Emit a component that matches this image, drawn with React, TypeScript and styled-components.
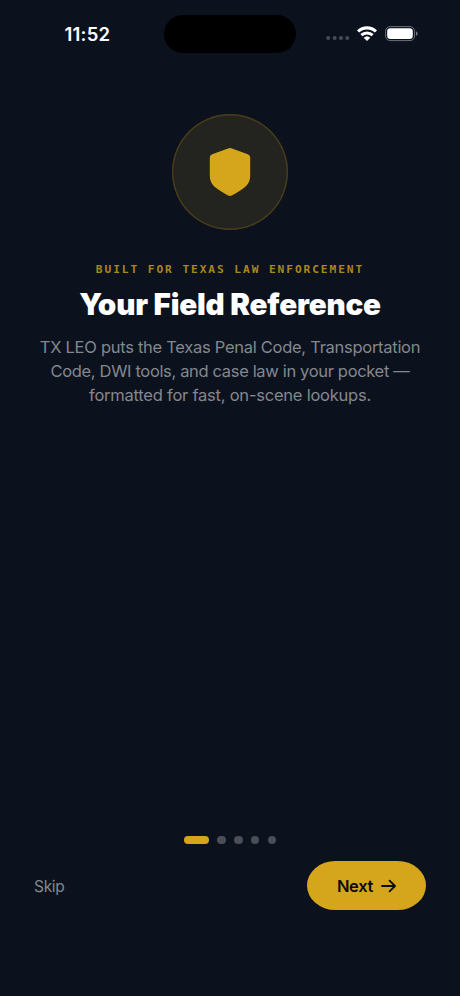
import React from "react";
import styled, { createGlobalStyle } from "styled-components";

const GlobalStyle = createGlobalStyle`
  *, *::before, *::after { box-sizing: border-box; }
  body { margin: 0; background: #0b121e; }
`;

const Screen = styled.main`
  width: 460px;
  height: 996px;
  display: flex;
  flex-direction: column;
  overflow: hidden;
  background: #0b121e;
  font-family: Inter, "Liberation Sans", sans-serif;
`;

const StatusBar = styled.header`
  display: grid;
  grid-template-columns: 164px 132px 164px;
  align-items: center;
  height: 38px;
  margin-top: 15px;
`;

const Time = styled.time`
  padding: 0 0 0 64.5px;
  font-size: 18.5px;
  line-height: 22px;
  font-weight: 600;
  letter-spacing: 0.2px;
  color: #fff;
`;

const Island = styled.div`
  height: 38px;
  border-radius: 19px;
  background: #000;
`;

const Indicators = styled.div`
  display: flex;
  align-items: center;
  padding-left: 30px;
  svg { display: block; flex: none; }
`;

const Hero = styled.section`
  display: flex;
  flex-direction: column;
  align-items: center;
  padding-top: 61px;
  text-align: center;
`;

const Emblem = styled.div`
  display: grid;
  place-items: center;
  width: 116px;
  height: 116px;
  border-radius: 50%;
  background: #23231f;
  box-shadow: inset 0 0 0 1.4px #4a3d19;
`;

const Kicker = styled.p`
  margin: 32px 0 0;
  font-family: "DejaVu Sans Mono", "Liberation Mono", monospace;
  font-size: 11.2px;
  line-height: 16px;
  font-weight: 700;
  letter-spacing: 1.92px;
  color: #a9871c;
`;

const Title = styled.h1`
  margin: 8px 0 0;
  font-size: 29.6px;
  line-height: 36px;
  font-weight: 900;
  letter-spacing: -0.18px;
  color: #fff;
`;

const Description = styled.p`
  margin: 13px 0 0;
  font-size: 16.5px;
  line-height: 24px;
  color: #84878d;
`;

const Line = styled.span<{ $tracking: number }>`
  display: block;
  white-space: nowrap;
  letter-spacing: ${(p) => p.$tracking}px;
`;

const Footer = styled.footer`
  margin-top: auto;
  padding: 0 34px 86px;
`;

const Pager = styled.div`
  display: flex;
  justify-content: center;
  gap: 8.5px;
`;

const Dot = styled.span<{ $active?: boolean }>`
  width: ${(p) => (p.$active ? 25 : 8.3)}px;
  height: 8.3px;
  border-radius: 5px;
  background: ${(p) => (p.$active ? "#d5a61c" : "#4b4e57")};
`;

const Actions = styled.div`
  display: flex;
  align-items: center;
  justify-content: space-between;
  margin-top: 17px;
`;

const SkipButton = styled.button`
  padding: 2px 0 0;
  border: 0;
  background: none;
  font: 400 15.5px/20px Inter, sans-serif;
  letter-spacing: -0.3px;
  color: #84878d;
`;

const NextButton = styled.button`
  display: flex;
  align-items: center;
  justify-content: center;
  gap: 8px;
  width: 119px;
  height: 49px;
  padding: 0;
  border: 0;
  border-radius: 29px / 25px;
  background: #d5a61c;
  font: 600 16.5px/20px Inter, sans-serif;
  letter-spacing: -0.3px;
  color: #0b0d0f;
`;

const lines = [
  { text: "TX LEO puts the Texas Penal Code, Transportation", tracking: -0.28 },
  { text: "Code, DWI tools, and case law in your pocket —", tracking: -0.34 },
  { text: "formatted for fast, on-scene lookups.", tracking: -0.23 },
];

export default function App() {
  return (
    <Screen>
      <GlobalStyle />
      <StatusBar>
        <Time>11:52</Time>
        <Island />
        <Indicators>
          <svg width="94" height="20" viewBox="0 0 94 20">
            <g fill="#464b56">
              <circle cx="2.2" cy="14" r="2" />
              <circle cx="8.6" cy="14" r="2" />
              <circle cx="15" cy="14" r="2" />
              <circle cx="21.2" cy="14" r="2" />
            </g>
            <g fill="none" stroke="#fff" strokeWidth="3.1">
              <path d="M32.1 7.5a12.7 12.7 0 0 1 17.8 0" />
              <path d="M35.4 11.2a8.1 8.1 0 0 1 11.2 0" />
            </g>
            <path d="M37.7 13.8a4.8 4.8 0 0 1 6.6 0L41 17z" fill="#fff" />
            <rect x="59.6" y="2.6" width="29" height="14" rx="4.6" fill="none" stroke="#6c7079" />
            <rect x="61.2" y="4.2" width="25.6" height="10.8" rx="3.2" fill="#fff" />
            <path d="M90 7.3v4.6c1-.4 1.6-1.3 1.6-2.3S91 7.7 90 7.3z" fill="#757981" />
          </svg>
        </Indicators>
      </StatusBar>
      <Hero>
        <Emblem>
          <svg width="42" height="50" viewBox="0 0 42 50">
            <path
              d="M19 1.4Q21 .6 23 1.4L38.8 7.2Q41.2 8 41.2 10.4V28.5C41.2 34.5 38.5 38.5 33.8 41.7C30.5 44 26.5 46.6 22.8 48.5Q21 49.4 19.2 48.5C15.5 46.6 11.5 44 8.2 41.7C3.5 38.5.8 34.5.8 28.5V10.4Q.8 8 3.2 7.2Z"
              fill="#d5a61c"
            />
          </svg>
        </Emblem>
        <Kicker>BUILT FOR TEXAS LAW ENFORCEMENT</Kicker>
        <Title>Your Field Reference</Title>
        <Description>
          {lines.map((l) => (
            <Line key={l.text} $tracking={l.tracking}>{l.text}</Line>
          ))}
        </Description>
      </Hero>
      <Footer>
        <Pager>
          <Dot $active />
          <Dot />
          <Dot />
          <Dot />
          <Dot />
        </Pager>
        <Actions>
          <SkipButton>Skip</SkipButton>
          <NextButton>
            Next
            <svg width="15" height="14" viewBox="0 0 15 14" fill="none" stroke="currentColor" strokeWidth="1.8" strokeLinecap="round" strokeLinejoin="round">
              <path d="M1 7h12.8M8.6 1.6 14 7l-5.4 5.4" />
            </svg>
          </NextButton>
        </Actions>
      </Footer>
    </Screen>
  );
}
